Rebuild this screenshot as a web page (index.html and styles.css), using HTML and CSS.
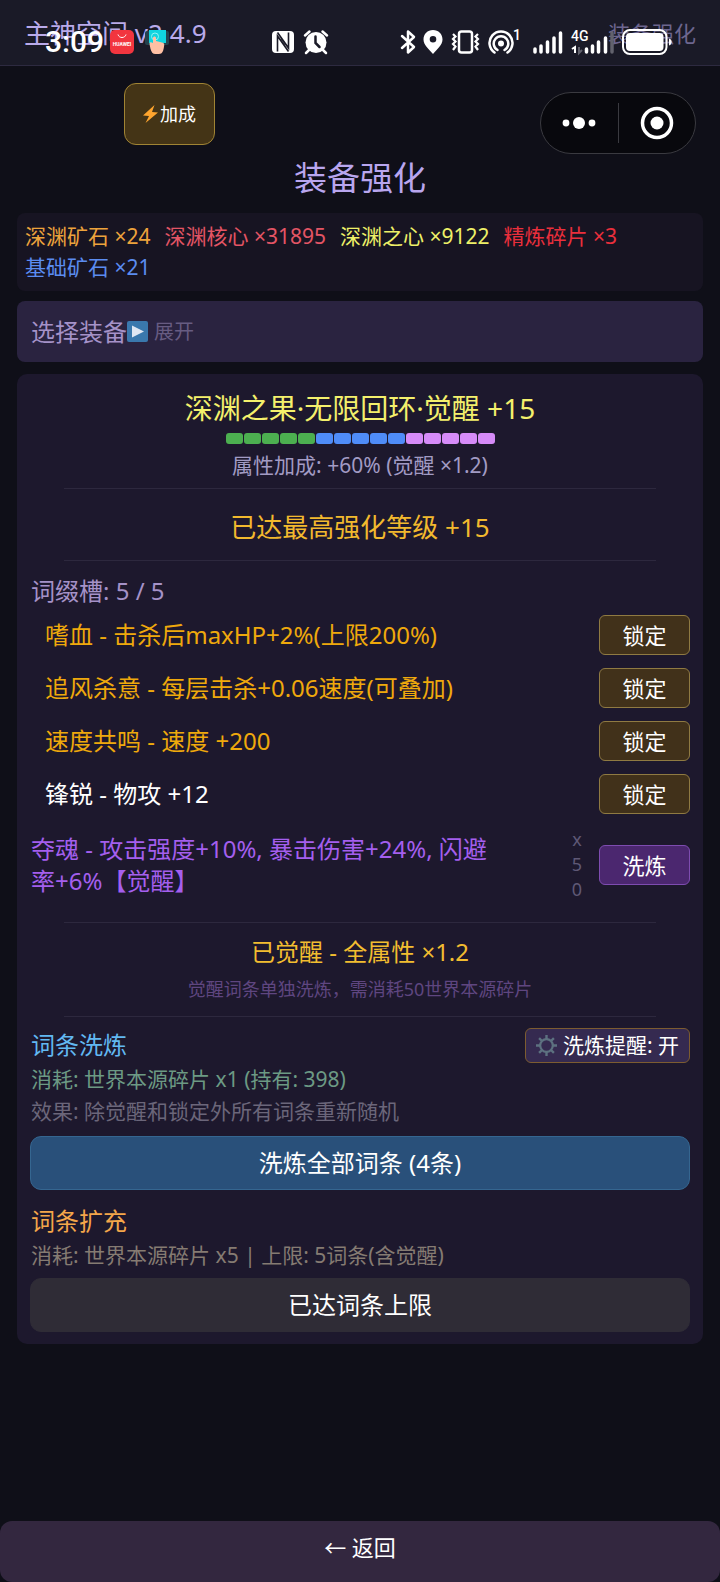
FILE: index.html
```html
<!DOCTYPE html>
<html lang="zh-CN">
<head>
<meta charset="utf-8">
<meta name="viewport" content="width=device-width, initial-scale=1">
<title>装备强化</title>
<link rel="stylesheet" href="styles.css">
</head>
<body>
<div class="app">
  <header class="topbar">
    <span class="topbar-name">主神空间 v2.4.9</span>
    <span class="topbar-page">装备强化</span>
    <div class="status">
      <span class="clock">3:09</span>
      <svg class="app-icon" width="24" height="24" viewBox="0 0 24 24"><rect width="24" height="24" rx="5" fill="#f2353f"/><path d="M8 4.500c1 4 7 4 8 0" fill="none" stroke="#fff" stroke-width="1"/><text x="12" y="15.600" text-anchor="middle" font-size="5" font-weight="700" fill="#fff">HUAWEI</text></svg>
      <svg class="touch-icon" width="24" height="24" viewBox="0 0 24 24"><rect y="1" width="24" height="14" rx="2" fill="#24424e"/><rect x="4" width="17" height="13" fill="#10d5df"/><circle cx="10" cy="6.500" r="3.500" fill="none" stroke="#8ff3f5"/><path d="M8 8c0-2 3-2 3 0v3l6 1.500c2.500.5 2.500 2 2 4-.5 4-1.500 7.500-5 7.500h-3.500c-3 0-4-2-5-5l-1-5c0-2 1.500-2.500 3.500-1z" fill="#ffc0a4"/></svg>
      <svg class="nfc" width="22" height="24" viewBox="0 0 22 24"><rect y="1" width="22" height="22" rx="4" fill="#fff"/><path d="M5.500 21.500V6l7 9.500M16.500 2.500V18l-7-9.500M5.500 2.500l11 15.500M5.500 6l11 15.500" fill="none" stroke="#1a1a27" stroke-width="1.600"/></svg>
      <svg width="26" height="24" viewBox="0 0 26 24"><circle cx="13" cy="12.500" r="10.500" fill="#fff"/><path d="M2 5.500 6.500 1.500M24 5.500 19.500 1.500M6 20l-3 3M20 20l3 3" stroke="#fff" stroke-width="2.500" stroke-linecap="round"/><path d="M12.500 6.500v6.500l4 4" fill="none" stroke="#1a1a27" stroke-width="2.500" stroke-linecap="round"/></svg>
      <svg class="bt" width="16" height="24" viewBox="0 0 16 24"><path d="M2 6l12 11-6 5.500V1.500L14 7 2 18" fill="none" stroke="#fff" stroke-width="2.500" stroke-linejoin="round" stroke-linecap="round"/></svg>
      <svg class="pin" width="20" height="24" viewBox="0 0 20 24"><path fill-rule="evenodd" fill="#fff" d="M10 0c5.500 0 9.500 4 9.500 9.500C19.500 15 14 19 10 24 6 19 .5 15 .5 9.500.5 4 4.500 0 10 0zm0 6a3.300 3.300 0 1 0 0 6.600A3.300 3.300 0 0 0 10 6z"/></svg>
      <svg class="vib" width="29" height="24" viewBox="0 0 29 24"><rect x="8" y="1.500" width="13" height="21" rx="2.500" fill="none" stroke="#fff" stroke-width="2.500"/><path d="M2 4l2.500 2.500L2 9l2.500 2.500L2 14l2.500 2.500L2 20M27 4l-2.500 2.500L27 9l-2.500 2.500L27 14l-2.500 2.500L27 20" fill="none" stroke="#fff" stroke-width="2.200"/></svg>
      <svg class="hot" width="32" height="24" viewBox="0 0 32 24"><circle cx="13" cy="13.500" r="3" fill="#fff"/><path d="M9.500 20a7.300 7.300 0 1 1 7 0M6.500 22.500a11.500 11.500 0 1 1 13 0" fill="none" stroke="#fff" stroke-width="2.500" stroke-linecap="round"/><text x="25" y="10" font-size="14" font-weight="500" fill="#fff">1</text></svg>
      <svg class="sig" width="30" height="24" viewBox="0 0 30 24"><path d="M2 19v3M8 16v6M14.500 12v10M21 8v14M27.500 3v19" stroke="#fff" stroke-width="3.500" stroke-linecap="round"/></svg>
      <svg class="sig-4g" width="44" height="24" viewBox="0 0 44 24"><text x="0" y="11" font-size="14" font-weight="500" fill="#fff">4G</text><path d="M1 19l3-2v6" fill="none" stroke="#fff" stroke-width="2"/><path d="M8 17v6l3-3" fill="none" stroke="#62626d" stroke-width="2"/><path d="M15.500 19v3M21.500 16v6M27.500 12v10M34.500 8v14" stroke="#fff" stroke-width="3.500" stroke-linecap="round"/><path d="M41 3v19" stroke="#62626d" stroke-width="3.500" stroke-linecap="round"/></svg>
      <svg class="bat" width="51" height="26" viewBox="0 0 51 26"><rect x="1" y="1" width="43.500" height="24" rx="7" fill="none" stroke="#fff" stroke-width="2"/><rect x="4" y="4" width="37.500" height="18" rx="4" fill="#fff"/><path d="M47 9.500c3.500 1 3.500 6 0 7z" fill="#fff"/></svg>
    </div>
  </header>

  <div class="toolbar">
    <button class="boost" type="button"><svg width="15" height="18" viewBox="0 0 15 18"><path d="M11.500 0 0 10.500l6 .5L2.500 18 15 7.500 9 7z" fill="#ffa52e"/></svg>加成</button>
    <div class="capsule">
      <button type="button" aria-label="更多"><svg width="34" height="14" viewBox="0 0 34 14"><g fill="#fff"><circle cx="4" cy="7" r="3.400"/><circle cx="17" cy="7" r="6"/><circle cx="30" cy="7" r="3.400"/></g></svg></button>
      <button type="button" aria-label="关闭"><svg width="34" height="34" viewBox="0 0 34 34"><circle cx="17" cy="17" r="14.500" fill="none" stroke="#fff" stroke-width="3.500"/><circle cx="17" cy="17" r="6.500" fill="#fff"/></svg></button>
    </div>
  </div>

  <main class="content">
    <h1 class="title">装备强化</h1>

    <ul class="resources">
      <li class="c-orange">深渊矿石 ×24</li>
      <li class="c-rose">深渊核心 ×31895</li>
      <li class="c-yellow">深渊之心 ×9122</li>
      <li class="c-red">精炼碎片 ×3</li>
      <li class="c-blue">基础矿石 ×21</li>
    </ul>

    <button class="picker" type="button">选择装备<svg width="21" height="21" viewBox="0 0 21 21"><rect width="21" height="21" rx="2" fill="#3a78ad"/><path d="M5 4.500v12l12-6z" fill="#dfe6f2"/></svg><span class="picker-hint">展开</span></button>

    <section class="panel">
      <h2 class="item-name">深渊之果·无限回环·觉醒 +15</h2>
      <div class="levels">
        <i class="g"></i><i class="g"></i><i class="g"></i><i class="g"></i><i class="g"></i><i class="b"></i><i class="b"></i><i class="b"></i><i class="b"></i><i class="b"></i><i class="p"></i><i class="p"></i><i class="p"></i><i class="p"></i><i class="p"></i>
      </div>
      <p class="bonus">属性加成: +60% (觉醒 ×1.2)</p>
      <hr>
      <p class="maxed">已达最高强化等级 +15</p>
      <hr>
      <h3 class="slots">词缀槽: 5 / 5</h3>
      <ul class="affixes">
        <li><span>嗜血 - 击杀后maxHP+2%(上限200%)</span><button class="lock" type="button">锁定</button></li>
        <li><span>追风杀意 - 每层击杀+0.06速度(可叠加)</span><button class="lock" type="button">锁定</button></li>
        <li><span>速度共鸣 - 速度 +200</span><button class="lock" type="button">锁定</button></li>
        <li class="plain"><span>锋锐 - 物攻 +12</span><button class="lock" type="button">锁定</button></li>
      </ul>
      <div class="awakened">
        <p class="awakened-text">夺魂 - 攻击强度+10%, 暴击伤害+24%, 闪避率+6%【觉醒】</p>
        <span class="cost">x50</span>
        <button class="lock reroll" type="button">洗炼</button>
      </div>
      <hr>
      <p class="awake-state">已觉醒 - 全属性 ×1.2</p>
      <p class="awake-note">觉醒词条单独洗炼，需消耗50世界本源碎片</p>
      <hr>
      <div class="section-head">
        <h3 class="c-sky">词条洗炼</h3>
        <button class="remind" type="button"><svg width="21" height="21" viewBox="0 0 21 21"><circle cx="10.500" cy="10.500" r="6.300" fill="none" stroke="#5d7180" stroke-width="2.200"/><path d="M10.500 0v4M10.500 17v4M0 10.500h4M17 10.500h4M3.100 3.100 6 6M15 15l2.900 2.900M3.100 17.900 6 15M15 6l2.900-2.900" stroke="#5d7180" stroke-width="2.400"/></svg>洗炼提醒: 开</button>
      </div>
      <p class="line c-green">消耗: 世界本源碎片 x1 (持有: 398)</p>
      <p class="line c-grey">效果: 除觉醒和锁定外所有词条重新随机</p>
      <button class="wide primary" type="button">洗炼全部词条 (4条)</button>
      <h3 class="c-amber">词条扩充</h3>
      <p class="line c-sand">消耗: 世界本源碎片 x5 | 上限: 5词条(含觉醒)</p>
      <button class="wide muted" type="button">已达词条上限</button>
    </section>
  </main>

  <button class="back" type="button">← 返回</button>
</div>
</body>
</html>
```

FILE: styles.css
```css
* { box-sizing: border-box; }

body {
  margin: 0;
  background: #0f0f18;
  color: #fff;
  font-family: "Noto Sans", "Noto Sans CJK SC", sans-serif;
  font-size: 24px;
}

h1, h2, h3, p, ul { margin: 0; padding: 0; font-weight: 400; }
ul { list-style: none; }
button { font: inherit; line-height: 32px; color: inherit; margin: 0; padding: 0; cursor: pointer; }
svg { display: block; flex: none; overflow: visible; }

.app { display: flex; flex-direction: column; min-height: 100vh; }

.topbar {
  position: relative;
  display: flex;
  align-items: center;
  justify-content: space-between;
  height: 66px;
  padding: 0 24px;
  line-height: 32px;
  background: #1a1a27;
  border-bottom: 1px solid #2d2a40;
}
.topbar-name { font-size: 26px; color: #b9aaea; }
.topbar-page { font-size: 22px; color: #6d668f; }

/* system status bar, drawn over the page header */
.status {
  position: absolute;
  inset: 24px 47px 6px 45px;
  display: flex;
  align-items: center;
}
.clock { font: 500 30px/36px Roboto, sans-serif; width: 65px; }
.touch-icon { margin-left: 11px; }
.nfc { margin: 0 9px 0 103px; }
.bt { margin-left: auto; }
.pin { margin-left: 7px; }
.vib, .hot { margin-left: 8px; }
.sig { margin-left: 13px; }
.sig-4g { margin-left: 8px; }
.bat { margin-left: 7px; }
.status text { font-family: Roboto, sans-serif; }

.toolbar {
  display: flex;
  justify-content: space-between;
  padding: 17px 24px 0 124px;
  height: 88px;
}
.boost {
  display: flex;
  align-items: center;
  justify-content: center;
  gap: 2px;
  width: 91px;
  height: 62px;
  font-size: 18px;
  background: #443416;
  border: 1px solid #a08434;
  border-radius: 12px;
}
.capsule {
  display: flex;
  align-items: center;
  align-self: flex-end;
  width: 156px;
  height: 62px;
  background: #08080d;
  border: 1px solid #3a3a40;
  border-radius: 31px;
}
.capsule button {
  flex: 1;
  display: flex;
  align-items: center;
  justify-content: center;
  height: 40px;
  background: none;
  border: 0;
}
.capsule button + button { border-left: 1px solid #3a3a40; }

.content { padding: 0 17px; }
.title {
  padding: 4px 0 15px;
  font-size: 33px;
  line-height: 40px;
  text-align: center;
  color: #b9a6ee;
}

.resources {
  display: flex;
  flex-wrap: wrap;
  column-gap: 14px;
  padding: 8px;
  font-size: 21px;
  line-height: 31px;
  background: #171422;
  border-radius: 8px;
}

.picker {
  display: flex;
  align-items: center;
  width: 100%;
  height: 61px;
  margin: 10px 0 12px;
  padding: 0 14px;
  color: #a592c8;
  background: #2a2340;
  border: 0;
  border-radius: 8px;
}
.picker-hint { margin-left: 6px; font-size: 20px; color: #675c82; }

.panel {
  padding: 14px 13px 12px;
  background: #1d182d;
  border-radius: 10px;
}
hr {
  height: 1px;
  margin: 0 34px;
  border: 0;
  background: #2d283e;
}
.item-name { font-size: 28px; line-height: 40px; text-align: center; color: #f4f06c; }
.levels { display: flex; justify-content: center; gap: 1px; margin-top: 5px; }
.levels i { width: 17px; height: 11px; border-radius: 3px; }
.g { background: #4caf50; }
.b { background: #4f8cf8; }
.p { background: #d68bf8; }
.bonus { padding: 6px 0 8px; font-size: 21px; line-height: 30px; text-align: center; color: #a29bc4; }
.maxed { padding: 20px 0 15px; font-size: 26px; line-height: 36px; text-align: center; color: #f2b92e; }

.panel h3 { padding-left: 1px; font-size: 24px; line-height: 36px; }
.panel .slots { padding: 12px 0 6px 1px; color: #a592c8; }
.affixes { display: grid; gap: 13px; padding-left: 15px; color: #efa90c; }
.affixes li { display: flex; align-items: center; justify-content: space-between; line-height: 32px; }
.affixes .plain { color: #fff; }
.lock {
  flex: none;
  width: 91px;
  height: 40px;
  font-size: 22px;
  color: #fff;
  background: #41311a;
  border: 1px solid #8f7a42;
  border-radius: 6px;
}
.awakened {
  display: flex;
  align-items: center;
  margin: 13px 0 20px;
  padding-left: 1px;
}
.awakened-text { flex: 1; max-width: 468px; line-height: 32px; color: #a45fee; }
.cost {
  width: 12px;
  margin: 0 16px 0 auto;
  font-size: 18px;
  line-height: 25px;
  text-align: center;
  word-break: break-all;
  color: #5f5876;
}
.reroll { background: #4b276f; border-color: #7e4cb0; }

.awake-state { padding: 11px 0 2px; line-height: 36px; text-align: center; color: #f2bd30; }
.awake-note { padding: 3px 0 13px; font-size: 18px; line-height: 28px; text-align: center; color: #5f4680; }

.section-head { display: flex; align-items: center; justify-content: space-between; padding-top: 10px; }
.remind {
  display: flex;
  align-items: center;
  justify-content: center;
  gap: 6px;
  width: 165px;
  height: 35px;
  font-size: 21px;
  background: #352a50;
  border: 1px solid #7d5c30;
  border-radius: 6px;
}
.line { padding-left: 1px; font-size: 21px; line-height: 32px; }
.wide {
  display: block;
  width: 100%;
  height: 54px;
  margin: 9px 0 13px;
  border: 1px solid #356690;
  border-radius: 11px;
}
.primary { background: #29507a; }
.muted { margin: 7px 0 0; background: #2f2c36; border-color: #2f2c36; }

.back {
  width: 100%;
  height: 61px;
  margin-top: auto;
  padding-bottom: 10px;
  font-size: 22px;
  background: #33273f;
  border: 0;
  border-radius: 12px;
}

.c-orange { color: #eda33c; }
.c-rose { color: #e35565; }
.c-yellow { color: #eef068; }
.c-red { color: #ea2f3c; }
.c-blue { color: #5b8cf0; }
.c-sky { color: #62b8f2; }
.c-green { color: #6c9a84; }
.c-grey { color: #6b667a; }
.c-amber { color: #f4a64a; }
.c-sand { color: #857b72; }
```
